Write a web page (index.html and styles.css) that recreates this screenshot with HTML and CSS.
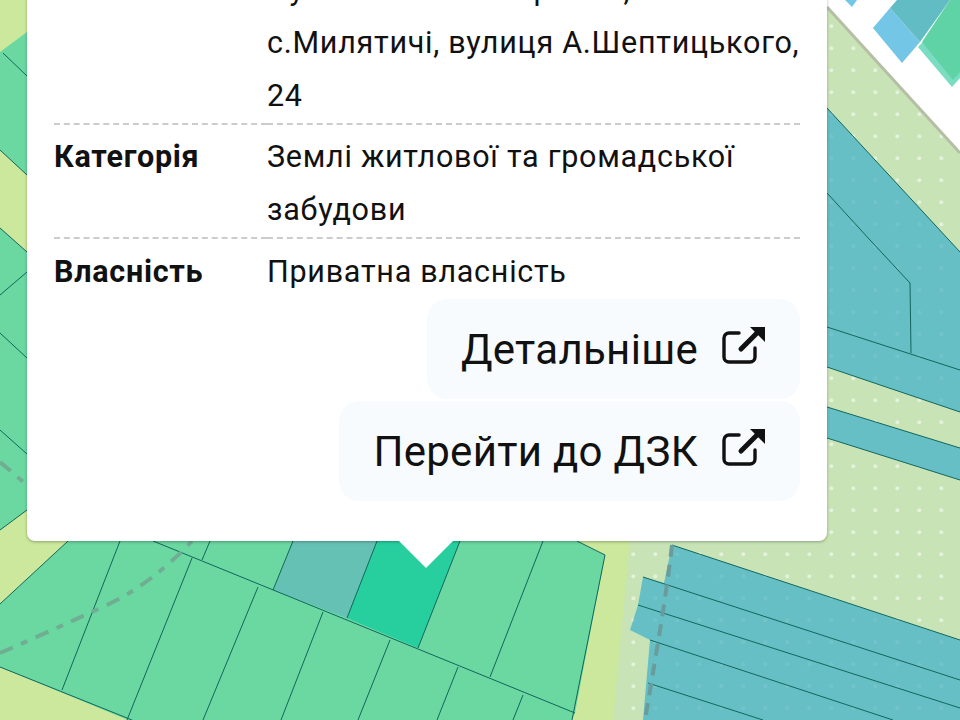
FILE: index.html
```html
<!DOCTYPE html>
<html lang="uk">
  <head>
    <meta charset="UTF-8" />
    <title>Кадастрова ділянка</title>
    <link rel="stylesheet" href="styles.css">
  </head>

  <body>
    <svg class="map" viewBox="0 0 960 720" width="960" height="720">
      <defs>
        <pattern id="dots" width="22" height="22" patternUnits="userSpaceOnUse">
          <circle cx="17.3" cy="4.3" r="2" fill="#fff" fill-opacity="0.5" />
        </pattern>
        <pattern id="dots-faint" width="22" height="22" patternUnits="userSpaceOnUse">
          <circle cx="17.3" cy="4.3" r="2" fill="#fff" fill-opacity="0.08" />
        </pattern>
      </defs>

      <rect width="960" height="720" fill="#cbe89c" />

      <!-- light field with dots -->
      <polygon class="field" points="827,7 960,153 960,720 613,720 630,541 827,541" />
      <polygon fill="url(#dots)" points="827,7 960,153 960,720 613,720 630,541 827,541" />
      <polygon class="road" points="827,0 960,0 960,153 827,7" />
      <line class="road-edge" x1="827" y1="7" x2="960" y2="153" />

      <!-- blue parcels on the right -->
      <polygon class="blue" points="827,108 960,252 960,412 827,367" />
      <polygon class="blue" points="827,407 960,448 960,480 827,438" />
      <polygon class="blue" points="672,545 960,640 960,720 643,720 650,640 630,630 638,605 643,577 664,583" />
      <polygon fill="url(#dots-faint)" points="827,108 960,252 960,412 827,367" />
      <polygon fill="url(#dots-faint)" points="672,545 960,640 960,720 643,720 650,640 630,630 638,605 643,577 664,583" />
      <polyline class="line" points="827,193 870,240 910,283 911,353" />
      <line class="line" x1="827" y1="327" x2="960" y2="370" />
      <line class="line" x1="827" y1="367" x2="960" y2="412" />
      <line class="line" x1="827" y1="407" x2="960" y2="448" />
      <line class="line" x1="827" y1="438" x2="960" y2="480" />
      <line class="line" x1="827" y1="108" x2="960" y2="252" />
      <polyline class="line" points="672,545 960,640" />
      <polyline class="line" points="643,577 960,680" />
      <polyline class="line" points="638,605 960,708" />
      <polyline class="line" points="650,640 893,720" />
      <polyline class="line" points="648,683 763,720" />
      <path class="track track-blue" d="M672 545 C667 590 657 650 645 720" />

      <!-- top right corner -->
      <polygon class="green-pale" points="918,47 952,87 960,78 960,60 925,40" />
      <polygon class="green-soft" points="950,0 960,0 960,72 953,80 922,42" />
      <polygon class="blue-pale" points="873,28 890,8 920,42 902,63" />
      <polygon class="blue-mid" points="897,0 950,0 920,42 890,8" />
      <polygon class="blue-pale" points="845,0 857,0 852,7" />

      <!-- green parcels on the left edge -->
      <polygon class="green" points="0,52 27,32 27,175 0,150" />
      <polygon class="green" points="0,228 27,252 27,510 0,530" />
      <polyline class="line" points="3,53 27,76" />
      <polyline class="line" points="0,150 27,175" />
      <polyline class="line" points="0,228 27,252" />
      <polyline class="line" points="0,295 27,272" />
      <polyline class="line" points="0,333 27,358" />
      <polyline class="line" points="0,430 27,454" />
      <polyline class="line" points="0,530 27,510" />
      <path class="track" d="M0 462 L27 485" />

      <!-- green parcels at the bottom -->
      <polygon class="green" points="68,541 577,541 605,555 575,713 572,720 128,720 0,667 0,604" />
      <polygon class="teal" points="293,541 377,541 347,618 273,590" />
      <polygon class="selected" points="377,541 460,541 418,648 347,618" />
      <polyline class="line" points="0,604 68,541" />
      <polyline class="line" points="0,667 127,718 153,729" />
      <polyline class="line" points="120,541 62,690" />
      <polyline class="line" points="192,558 127,720" />
      <polyline class="line" points="258,587 203,720" />
      <polyline class="line" points="323,612 281,720" />
      <polyline class="line" points="390,640 358,720" />
      <polyline class="line" points="458,667 437,720" />
      <polyline class="line" points="210,541 202,560" />
      <polyline class="line" points="293,541 273,590" />
      <polyline class="line" points="377,541 347,618" />
      <polyline class="line" points="460,541 418,648" />
      <polyline class="line" points="543,541 490,677" />
      <polyline class="line" points="523,695 513,720" />
      <polyline class="line" points="153,541 575,713" />
      <polyline class="line" points="577,541 605,555 572,720" />
      <path class="track" d="M0 653 C35 638 70 622 107 605 C135 592 165 570 192 541" />
    </svg>

    <div class="popup">
      <table class="info">
        <tr>
          <th></th>
          <td>Пустомитівський район, с.Милятичі, вулиця А.Шептицького, 24</td>
        </tr>
        <tr>
          <th>Категорія</th>
          <td>Землі житлової та громадської забудови</td>
        </tr>
        <tr>
          <th>Власність</th>
          <td>Приватна власність</td>
        </tr>
      </table>

      <div class="actions">
        <a class="btn" href="#">
          Детальніше
          <svg class="ext" viewBox="0 0 44 40" width="44" height="40"><path d="M17 8H7a5 5 0 0 0-5 5v19a5 5 0 0 0 5 5h21a5 5 0 0 0 5-5V23" fill="none" stroke="#111" stroke-width="3.4" stroke-linecap="round"/><path d="M19 24 36 7" stroke="#111" stroke-width="5" stroke-linecap="round"/><path d="M28 2H43V17Z" fill="#111"/></svg>
        </a>
        <a class="btn" href="#">
          Перейти до ДЗК
          <svg class="ext" viewBox="0 0 44 40" width="44" height="40"><path d="M17 8H7a5 5 0 0 0-5 5v19a5 5 0 0 0 5 5h21a5 5 0 0 0 5-5V23" fill="none" stroke="#111" stroke-width="3.4" stroke-linecap="round"/><path d="M19 24 36 7" stroke="#111" stroke-width="5" stroke-linecap="round"/><path d="M28 2H43V17Z" fill="#111"/></svg>
        </a>
      </div>
      <div class="tip"></div>
    </div>
  </body>
</html>
```

FILE: styles.css
```css
* {
  box-sizing: border-box;
}

html,
body {
  height: 100%;
}

body {
  margin: 0;
  overflow: hidden;
  font-family: Roboto, "Liberation Sans", sans-serif;
  color: #111;
}

.map {
  position: absolute;
  top: 0;
  left: 0;
}

.field { fill: #c8e4b6; }
.road { fill: #fff; }
.road-edge { stroke: #b5bfa5; stroke-width: 3; }
.blue { fill: #66bfc5; }
.blue-pale { fill: #74c6e6; }
.blue-mid { fill: #62bcc4; }
.green { fill: #6ad8a0; }
.green-soft { fill: #5fd3a5; }
.green-pale { fill: #7adcc0; }
.teal { fill: #66c1b5; }
.selected { fill: #27cf9f; }

.line {
  fill: none;
  stroke: #12665c;
  stroke-width: 1;
}

.track {
  fill: none;
  stroke: #6fae92;
  stroke-width: 4;
  stroke-dasharray: 14 9 7 9;
}

.track-blue {
  stroke: #6a9c9c;
  stroke-dasharray: 12 8;
}

.popup {
  position: absolute;
  left: 27px;
  bottom: 179px;
  width: 800px;
  padding: 0 27px 40px;
  background: #fff;
  border-radius: 0 0 8px 8px;
  box-shadow: 0 1px 3px rgba(0, 0, 0, 0.3);
}

.info {
  width: 100%;
  border-collapse: collapse;
  font-size: 30.5px;
  line-height: 53px;
  letter-spacing: 0.73px;
}

.info tr + tr {
  border-top: 2px dashed #ccc;
}

.info th {
  width: 213px;
  padding: 5px 0 1px;
  text-align: left;
  vertical-align: top;
  font-weight: 700;
}

.info td {
  padding: 5px 0 1px;
}

.info tr:last-child th,
.info tr:last-child td {
  padding: 6px 0 0;
}

.actions {
  display: flex;
  flex-direction: column;
  align-items: flex-end;
  gap: 2px;
  margin-top: 1px;
}

.btn {
  display: flex;
  align-items: center;
  gap: 24px;
  height: 100px;
  padding: 0 34px;
  border-radius: 20px;
  background: #f8fbfd;
  color: #111;
  font-size: 42px;
  letter-spacing: 0.3px;
  text-decoration: none;
  white-space: nowrap;
}

.ext {
  flex: none;
  margin-bottom: 8px;
}

.tip {
  position: absolute;
  left: 372px;
  bottom: -27px;
  width: 0;
  height: 0;
  border-left: 27px solid transparent;
  border-right: 27px solid transparent;
  border-top: 27px solid #fff;
}
```
